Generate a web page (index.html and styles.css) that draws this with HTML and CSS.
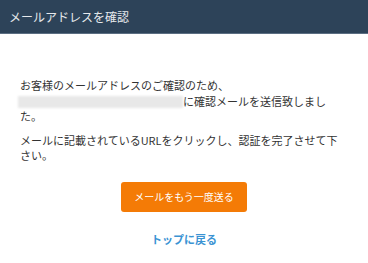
FILE: index.html
```html
<!DOCTYPE html>
<html>
<head>
    <title>メールアドレスを確認</title>
    <link rel="stylesheet" href="styles.css">
</head>
<body>
    <div class="header">メールアドレスを確認</div>

    <div class="content">
        <p class="msg">お客様のメールアドレスのご確認のため、<br><span class="masked"></span>に確認メールを送信致しました。</p>
        <p class="msg">メールに記載されているURLをクリックし、認証を完了させて下さい。</p>

        <div class="actions">
            <button class="resend">メールをもう一度送る</button>
            <a class="back" href="#">トップに戻る</a>
        </div>
    </div>
</body>
</html>
```

FILE: styles.css
```css
* {
    margin: 0;
    padding: 0;
    box-sizing: border-box;
}
body {
    font-family: "Noto Sans CJK JP", "Noto Sans", sans-serif;
    background: #fff;
    color: #333;
}
.header {
    height: 34px;
    background: #2d4359;
    border-bottom: 1px solid #5b6e82;
    color: #e6e9ec;
    font-size: 12px;
    line-height: 33px;
    padding-left: 9px;
}
.content {
    padding: 44px 28px 0 20px;
}
.msg {
    font-size: 11px;
    line-height: 15.5px;
    margin-bottom: 8px;
}
.masked {
    display: inline-block;
    width: 165px;
    height: 12px;
    margin-left: -2px;
    vertical-align: -2px;
    background: #e8e8e8;
    filter: blur(1px);
}
.actions {
    display: flex;
    flex-direction: column;
    align-items: center;
    margin-top: 18px;
    margin-left: -20px;
    margin-right: -28px;
}
.resend {
    width: 126px;
    height: 30px;
    border: none;
    border-radius: 3px;
    background: #f47b06;
    color: #fff;
    font-family: inherit;
    font-size: 10px;
}
.back {
    margin-top: 19px;
    color: #3b93d3;
    font-size: 11px;
    font-weight: bold;
    text-decoration: none;
}
```
